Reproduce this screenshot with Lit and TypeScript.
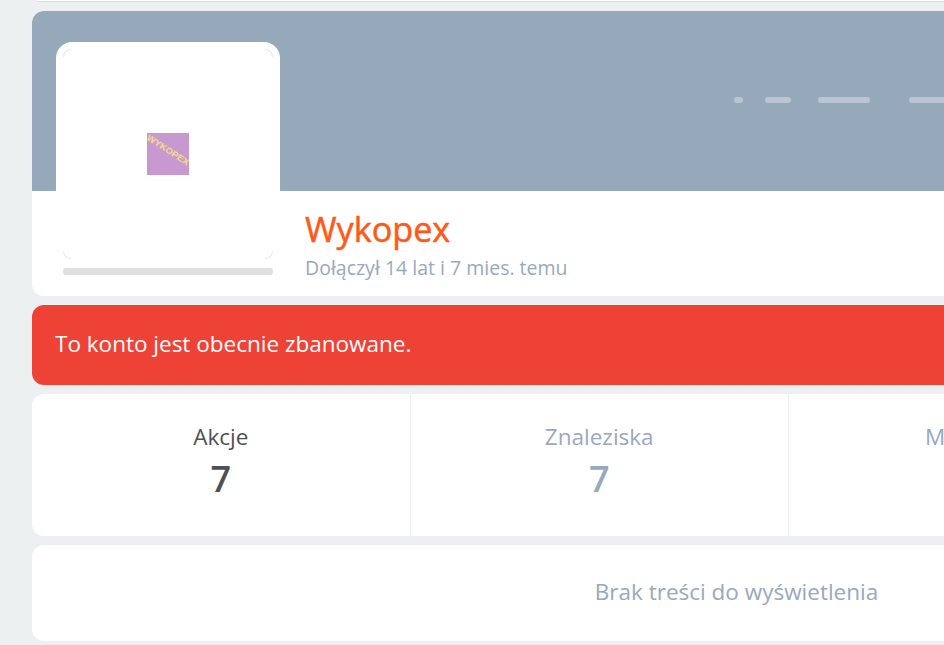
import { LitElement, html, css } from "lit";
import { customElement } from "lit/decorators.js";

const stats = [
  { label: "Akcje", value: "7", active: true },
  { label: "Znaleziska", value: "7", active: false },
  { label: "Mikroblog", value: "0", active: false },
  { label: "Obserwujący", value: "0", active: false },
];

@customElement("app-root")
export class AppRoot extends LitElement {
  static styles = css`
    :host {
      display: block;
      width: 944px;
      height: 645px;
      overflow: hidden;
      background: #ecf0f1;
      font-family: "Open Sans", "Noto Sans", sans-serif;
    }
    .page {
      width: 1409px;
      margin-left: 32px;
      display: flex;
      flex-direction: column;
      gap: 9px;
    }
    .topbar {
      height: 2px;
      margin-left: 4px;
      background: #fff;
      border-bottom: 1px solid #d8dee1;
      border-radius: 0 0 4px 4px;
      box-sizing: border-box;
    }
    .profile {
      background: #fff;
      border-radius: 12px;
      overflow: hidden;
    }
    .banner {
      height: 180px;
      background: #96a9ba;
      display: flex;
      align-items: center;
      padding-left: 702px;
      padding-bottom: 2px;
      box-sizing: border-box;
    }
    .dash {
      height: 6px;
      border-radius: 3px;
      background: #bac6d3;
    }
    .identity {
      display: flex;
      height: 105px;
    }
    .avatar {
      width: 224px;
      margin: -149px 0 0 24px;
      padding: 7px;
      box-sizing: border-box;
      background: #fff;
      border-radius: 16px 16px 0 0;
      flex: none;
      align-self: flex-start;
    }
    .frame {
      position: relative;
      height: 210px;
      display: flex;
      align-items: center;
      justify-content: center;
    }
    .corner {
      position: absolute;
      width: 7px;
      height: 7px;
      border: 0 solid #e6e8ea;
    }
    .tl {
      top: 0;
      left: 0;
      border-top-width: 1px;
      border-left-width: 1px;
      border-top-left-radius: 10px;
    }
    .tr {
      top: 0;
      right: 0;
      border-top-width: 1px;
      border-right-width: 1px;
      border-top-right-radius: 10px;
    }
    .bl {
      bottom: 0;
      left: 0;
      border-bottom-width: 1px;
      border-left-width: 1px;
      border-bottom-left-radius: 10px;
    }
    .br {
      bottom: 0;
      right: 0;
      border-bottom-width: 1px;
      border-right-width: 1px;
      border-bottom-right-radius: 10px;
    }
    .logo {
      width: 42px;
      height: 42px;
      background: #c899cf;
      overflow: hidden;
      display: flex;
      align-items: center;
      justify-content: center;
    }
    .logo span {
      font-family: "Liberation Sans", sans-serif;
      font-size: 9.5px;
      font-weight: 700;
      line-height: 1;
      color: #f9e384;
      transform: translate(0, -4px) rotate(33deg);
      white-space: nowrap;
      filter: blur(0.2px);
    }
    .bar {
      height: 7px;
      margin-top: 9px;
      border-radius: 3px;
      background: #dfdfdf;
    }
    .who {
      margin-left: 25px;
      padding-top: 16px;
    }
    h1 {
      margin: 0;
      font-size: 34.2px;
      font-weight: 400;
      -webkit-text-stroke: 0.5px #ff5917;
      line-height: 44px;
      color: #ff5917;
    }
    .joined {
      font-size: 19.5px;
      line-height: 26px;
      margin-top: 4px;
      color: #97a9be;
    }
    .alert {
      height: 80px;
      background: #ef4236;
      border-radius: 12px;
      color: #fff;
      font-size: 22.5px;
      line-height: 30px;
      display: flex;
      align-items: center;
      padding: 0 0 2px 23px;
      box-sizing: border-box;
    }
    .stats {
      height: 142px;
      background: #fff;
      border-radius: 12px;
      display: flex;
      overflow: hidden;
    }
    .stat {
      width: 378.5px;
      flex: none;
      box-sizing: border-box;
      border-right: 1px solid #ecf0f1;
      text-align: center;
      color: #97a9be;
      padding-top: 28px;
    }
    .stat.active {
      color: #4f4f57;
    }
    .stat .label {
      font-size: 22.5px;
      line-height: 30px;
    }
    .stat .value {
      font-size: 36px;
      font-weight: 600;
      line-height: 50px;
      margin-top: 2px;
    }
    .empty {
      height: 96px;
      background: #fff;
      border-radius: 12px;
      display: flex;
      align-items: center;
      justify-content: center;
      font-size: 22.5px;
      line-height: 30px;
      padding-bottom: 2px;
      box-sizing: border-box;
      color: #97a9be;
    }
  `;

  render() {
    return html`
      <div class="page">
        <div class="topbar"></div>
        <section class="profile">
          <div class="banner">
            <div class="dash" style="width: 9px"></div>
            <div class="dash" style="width: 26px; margin-left: 22px"></div>
            <div class="dash" style="width: 52px; margin-left: 27px"></div>
            <div class="dash" style="width: 70px; margin-left: 39px"></div>
          </div>
          <div class="identity">
            <div class="avatar">
              <div class="frame">
                <i class="corner tl"></i><i class="corner tr"></i>
                <i class="corner bl"></i><i class="corner br"></i>
                <div class="logo"><span>WYKOPEX</span></div>
              </div>
              <div class="bar"></div>
            </div>
            <div class="who">
              <h1>Wykopex</h1>
              <div class="joined">Dołączył 14 lat i 7 mies. temu</div>
            </div>
          </div>
        </section>
        <div class="alert">To konto jest obecnie zbanowane.</div>
        <section class="stats">
          ${stats.map(
            (s) => html`<div class="stat ${s.active ? "active" : ""}">
              <div class="label">${s.label}</div>
              <div class="value">${s.value}</div>
            </div>`
          )}
        </section>
        <div class="empty">Brak treści do wyświetlenia</div>
      </div>
    `;
  }
}
